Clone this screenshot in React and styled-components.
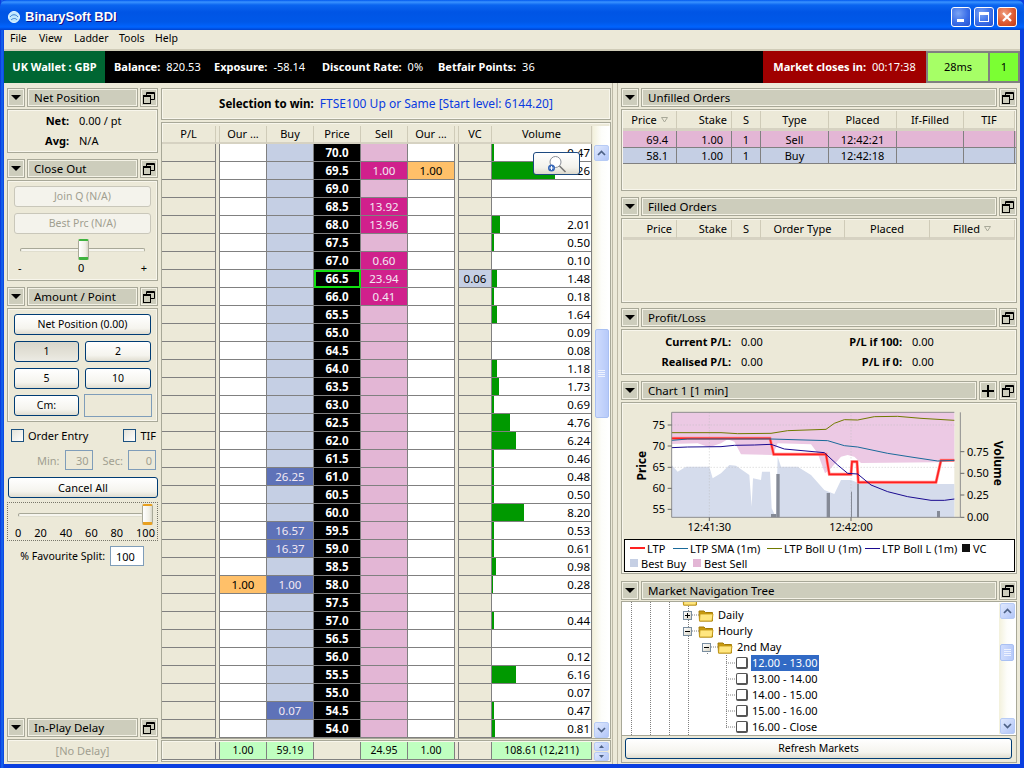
import React from "react";
import styled, { createGlobalStyle } from "styled-components";

const FONT = `"Noto Sans", "Liberation Sans", sans-serif`;
const CREAM = "#ece9d8";
const LINE = "#808080";

const Global = createGlobalStyle`
  html, body { margin: 0; padding: 0; background: #0a3ce0; }
  body { font-family: ${FONT}; font-size: 11px; line-height: 15px; color: #000; }
  * { box-sizing: border-box; }
`;

const Win = styled.div`
  width: 1024px; height: 768px; display: flex; flex-direction: column; overflow: hidden;
  background: linear-gradient(90deg, #0831d9 0, #166aee 2px, #0a3fe0 4px, #0a3fe0 1020px, #0a3fe0 100%);
`;
const TitleBar = styled.div`
  height: 30px; flex: none; display: flex; align-items: center; padding: 3px 7px 0 8px; gap: 5px;
  border-radius: 7px 7px 0 0;
  background: linear-gradient(180deg, #0058ee 0, #3a93ff 2px, #0a65f0 5px, #0055e5 12px, #0058e8 22px, #0064ff 27px, #0043cf 30px);
`;
const TitleText = styled.div`
  font: bold 13px "Liberation Sans", sans-serif; color: #fff; text-shadow: 1px 1px 0 #0f1089; flex: 1;
`;
const WinBtns = styled.div` display: flex; gap: 3px; `;
const WinBtn = styled.div`
  width: 20px; height: 20px; border: 1px solid #fff; border-radius: 3px; display: flex; align-items: center; justify-content: center;
  background: ${(p) => p.$close
    ? "radial-gradient(circle at 35% 30%, #f0a080, #dd5a32 55%, #c03a14)"
    : "radial-gradient(circle at 35% 30%, #7ba4f4, #3a6ee8 55%, #2450d0)"};
`;
const Client = styled.div`
  flex: 1; margin: 0 4px 4px; background: ${CREAM}; display: flex; flex-direction: column; min-height: 0;
`;
const MenuBar = styled.div`
  height: 21px; flex: none; display: flex; align-items: center; padding: 0 6px 2px; border-bottom: 2px solid #d0ccb8; font-size: 10.5px;
`;
const MenuItem = styled.span` width: ${(p) => p.$w}px; `;
const StatusBar = styled.div`
  height: 32px; flex: none; display: flex; background: #000; color: #fff; align-items: stretch;
`;
const Wallet = styled.div`
  width: 101px; background: #006633; font-weight: bold; display: flex; align-items: center; justify-content: center; padding-bottom: 2px;
`;
const Stats = styled.div` flex: 1; display: flex; align-items: center; padding: 0 0 2px 9px; `;
const Stat = styled.div` display: flex; gap: 6px; white-space: nowrap; width: ${(p) => p.$w}px; `;
const StatLabel = styled.b``;
const Closes = styled.div`
  width: 163px; background: #a00000; display: flex; align-items: center; justify-content: center; gap: 6px; white-space: nowrap; padding-bottom: 2px;
`;
const Lights = styled.div`
  display: flex; gap: 2px; background: ${LINE}; border: 2px solid ${LINE};
`;
const Light = styled.div`
  width: ${(p) => p.$w}px; background: ${(p) => p.$bg}; color: #000; display: flex; align-items: center; justify-content: center; padding-bottom: 2px;
`;

const Main = styled.div`
  flex: 1; min-height: 0; display: flex; padding: 5px 0 0 3px;
`;
const Column = styled.div`
  display: flex; flex-direction: column; min-height: 0; flex: none;
`;
const LeftCol = styled(Column)` width: 151px; padding-bottom: 2px; `;
const CenterCol = styled(Column)` margin-left: 3px; width: 450px; `;
const Splitter = styled.div` width: 6px; margin: -5px 0 0 1px; border-left: 1px solid #bdb9a6; border-right: 1px solid #bdb9a6; flex: none; `;
const RightCol = styled(Column)` margin-left: 3px; width: 396px; `;

const PanelWrap = styled.div` display: flex; flex-direction: column; flex: none; margin-bottom: ${(p) => p.$mb ?? 6}px; `;
const PanelHead = styled.div` display: flex; gap: 2px; height: 19px; flex: none; `;
const HeadBox = styled.div`
  background: #cdcdbc; border: 1px solid #a8a898; box-shadow: inset 0 0 0 1px #f4f2e6;
  display: flex; align-items: center; justify-content: center; flex: none; width: ${(p) => p.$w || 19}px;
`;
const HeadTitle = styled.div`
  flex: 1; background: #cdcdbc; border: 1px solid #a8a898; box-shadow: inset 0 0 0 1px #f4f2e6;
  display: flex; align-items: center; padding: 0 0 1px 6px; white-space: nowrap; font-size: 11.5px;
`;
const PanelBody = styled.div`
  margin-top: 2px; height: ${(p) => p.$h}px; border: 1px solid #a8a898; box-shadow: inset 0 0 0 1px #f8f6ec; position: relative;
  padding: ${(p) => p.$pad || "0"};
`;
const Arrow = styled.i`
  width: 0; height: 0; border-left: 5px solid transparent; border-right: 5px solid transparent; border-top: 5px solid #000;
`;
const RestoreIcon = () => (
  <svg width="12" height="12" viewBox="0 0 12 12" fill="none" stroke="#000" strokeWidth="1">
    <path d="M3.5 3.5V.5h8v7h-4" strokeWidth="1" />
    <path d="M3.5 1.5h8" />
    <rect x="0.5" y="3.5" width="7" height="8" fill="none" />
    <path d="M0.5 4.5h7" />
  </svg>
);
const PlusIcon = () => (
  <svg width="12" height="12" viewBox="0 0 12 12"><path d="M5 0h2v5h5v2H7v5H5V7H0V5h5z" fill="#000" /></svg>
);

function Panel({ title, h, pad, mb, plus, children }) {
  return (
    <PanelWrap $mb={mb}>
      <PanelHead>
        <HeadBox $w={18}><Arrow /></HeadBox>
        <HeadTitle>{title}</HeadTitle>
        {plus && <HeadBox $w={18}><PlusIcon /></HeadBox>}
        <HeadBox $w={18}><RestoreIcon /></HeadBox>
      </PanelHead>
      <PanelBody $h={h} $pad={pad}>{children}</PanelBody>
    </PanelWrap>
  );
}

const KV = styled.div`
  display: grid; grid-template-columns: 61px auto; row-gap: 5px; column-gap: 10px; padding-top: 3px; align-items: center;
`;
const KLabel = styled.b` text-align: right; white-space: nowrap; `;
const KValue = styled.span` white-space: nowrap; `;

const XpButton = styled.div`
  height: 21px; border-radius: 3px; border: 1px solid ${(p) => (p.$off ? "#c9c7ba" : "#003c74")};
  display: flex; align-items: center; justify-content: center; white-space: nowrap; font-size: 10.5px; padding-bottom: 1px;
  color: ${(p) => (p.$off ? "#a19f90" : "#000")};
  background: ${(p) => p.$off
    ? "#f4f3ec"
    : p.$on
      ? "linear-gradient(180deg, #d8d6cb, #e4e2d8 60%, #ecebe4)"
      : "linear-gradient(180deg, #fff, #f5f4ee 70%, #e0ddd0)"};
`;
const Stack = styled.div` display: flex; flex-direction: column; gap: 6px; `;
const TwoCol = styled.div` display: grid; grid-template-columns: 65px 66px; column-gap: 6px; `;
const GhostInput = styled.div` border: 1px solid #7f9db9; height: 23px; margin-top: -1px; width: 68px; margin-left: -1px; `;

const SliderWrap = styled.div` position: relative; height: 21px; margin-top: ${(p) => p.$mt || 0}px; `;
const Track = styled.div`
  position: absolute; left: ${(p) => p.$l}px; right: ${(p) => p.$r}px; top: 9px; height: 4px; border-radius: 2px;
  border: 1px solid #a8a898; border-bottom-color: #e0dece; background: #f6f5ee; border-left-color: #9d9c8e;
`;
const Thumb = styled.div`
  position: absolute; left: ${(p) => p.$x}px; top: 0; width: 11px; height: 21px; border: 1px solid #a9a998; border-radius: 2px;
  background: linear-gradient(90deg, #fff, #f0efe6 70%, #d8d6c8);
  border-top: 2px solid ${(p) => p.$c}; border-bottom: 3px solid ${(p) => p.$c};
`;
const ScaleRow = styled.div` display: flex; justify-content: space-between; padding: ${(p) => p.$pad}; `;

const CheckBox = styled.i`
  display: block; width: 13px; height: 13px; border: 1px solid #1c5180; background: linear-gradient(135deg, #e4e2d8, #fff);
`;
const OrderRow = styled.div` display: flex; justify-content: space-between; align-items: center; padding: 0 2px 0 4px; margin-top: 5px; height: 16px; `;
const CheckLabel = styled.label` display: flex; align-items: center; gap: 4px; `;
const TimeRow = styled.div` display: flex; justify-content: flex-end; align-items: center; gap: 5px; margin-top: 7px; padding-right: 2px; color: #a19f90; height: 20px; `;
const TimeBox = styled.div`
  border: 1px solid #7f9db9; width: 28px; height: 20px; display: flex; align-items: center; justify-content: flex-end; padding-right: 3px; margin-right: ${(p) => p.$mr || 0}px;
`;
const CancelBtn = styled(XpButton)` margin: 7px 0 0 1px; font-size: 11px; `;
const SplitBox = styled.div` border: 1px dotted #77766a; height: 39px; margin: 4px 0 0 0; padding: 1px 2px 0 4px; `;
const FavRow = styled.div` display: flex; justify-content: flex-end; align-items: center; gap: 5px; margin-top: 5px; padding-right: 14px; font-size: 10.5px; `;
const FavInput = styled.div`
  width: 34px; height: 20px; background: #fff; border: 1px solid #7f9db9; display: flex; align-items: center; padding-left: 5px; font-size: 11px;
`;
const Spacer = styled.div` flex: 1; `;
const NoDelay = styled.div` height: 100%; display: flex; align-items: center; justify-content: center; color: #a19f90; padding-bottom: 1px; `;

const SelectionBox = styled.div`
  height: 32px; flex: none; border: 1px solid #a8a898; box-shadow: inset 0 0 0 1px #f8f6ec; display: flex; align-items: center; justify-content: center; gap: 6px;
  font-size: 11.5px; padding-bottom: 1px;
`;
const SelLabel = styled.b``;
const SelName = styled.span` color: #0a3be0; font-size: 12px; `;
const LadderBox = styled.div`
  margin-top: 2px; height: 617px; border: 1px solid #a8a898; box-shadow: inset 0 0 0 1px #f8f6ec; padding: 3px 0 0 0; display: flex; position: relative;
`;
const GRID = "54px 4px 47px 47px 47px 47px 47px 4px 33px 100px";
const LadderTable = styled.div` width: 430px; `;
const HeadRow = styled.div` display: grid; grid-template-columns: ${GRID}; height: 18px; `;
const HCell = styled.div`
  display: flex; align-items: center; justify-content: center; border-bottom: 3px solid #d6d2c2; border-right: 1px solid #cfcbb8; white-space: nowrap; padding-bottom: 1px;
`;
const Row = styled.div` display: grid; grid-template-columns: ${GRID}; height: 18px; `;
const BG = {
  plain: CREAM, white: "#fff", buy: "#c5cfe4", buyOn: "#5e72b8", sell: "#e3b6d5", sellOn: "#d0208c", our: "#ffc069",
  vc: "#c5cfe4",
};
const Cell = styled.div`
  background: ${(p) => BG[p.$k] || CREAM}; color: ${(p) => (p.$k === "buyOn" || p.$k === "sellOn" ? "#f3e9f3" : "#000")};
  border-bottom: 1px solid ${LINE}; border-right: 1px solid ${LINE};
  display: flex; align-items: center; justify-content: center; font-size: 11.5px;
`;
const Gap = styled.div` background: ${CREAM}; border-right: 1px solid ${LINE}; `;
const PriceCell = styled.div`
  background: #000; color: #fff; font-weight: bold; font-size: 11.5px; display: flex; align-items: center; justify-content: center;
  border-bottom: 1px solid ${LINE}; border-right: 1px solid ${LINE};
  ${(p) => p.$cur && "outline: 2px solid #10e010; outline-offset: -2px;"}
`;
const VolCell = styled.div`
  background: #fff; border-bottom: 1px solid ${LINE}; border-right: 1px solid ${LINE}; display: flex; justify-content: space-between; align-items: center; font-size: 11.5px; padding-right: 1px;
`;
const VolBar = styled.div` height: 100%; background: #009900; flex: none; `;
const ScrollCol = styled.div` width: 17px; margin-left: 1px; padding: 19px 1px 0; display: flex; flex-direction: column; align-items: center;
  background: linear-gradient(90deg, #f3f1dc, #fdfdfa 50%, #fff 90%);
`;
const TreeScroll = styled(ScrollCol)` position: absolute; right: 1px; top: 1px; bottom: 1px; padding: 0 1px; width: 16px; margin: 0; `;
const SBtn = styled.div`
  width: 15px; height: 16px; flex: none; border: 1px solid #b7cbf5; border-radius: 2px; background: linear-gradient(135deg, #dfe8fd, #b2c6f8); display: flex; align-items: center; justify-content: center;
`;
const SThumb = styled.div`
  width: 14px; height: ${(p) => p.$h}px; flex: none; margin-top: ${(p) => p.$mt}px; margin-bottom: ${(p) => p.$mb}px; border: 1px solid #a9c0f3; border-radius: 2px;
  background: linear-gradient(90deg, #cfdcfd, #b7caf9); display: flex; align-items: center; justify-content: center;
`;
const Chev = ({ up }) => (
  <svg width="9" height="6" viewBox="0 0 9 6" fill="none" stroke="#4d6185" strokeWidth="1.7">
    <path d={up ? "M1 5l3.5-3.5L8 5" : "M1 1l3.5 3.5L8 1"} />
  </svg>
);
const Grip = () => (
  <svg width="7" height="8" viewBox="0 0 7 8" stroke="#eef2fe" strokeWidth="1"><path d="M0 .5h7M0 2.5h7M0 4.5h7M0 6.5h7" /></svg>
);
const Tooltip = styled.div`
  position: absolute; left: 371px; top: 29px; width: 47px; height: 23px; border: 1px solid #1d4a80; border-radius: 3px; background: linear-gradient(180deg, #fff, #f2f1eb 70%, #dcd9cc);
  display: flex; align-items: center; justify-content: center;
`;
const FootBox = styled.div`
  margin-top: 1px; height: 22px; border: 1px solid #a8a898; box-shadow: inset 0 0 0 1px #f8f6ec; padding: 1px 0 0 0; display: flex;
`;
const FootRow = styled.div` display: grid; grid-template-columns: ${GRID}; width: 430px; height: 18px; `;
const FCell = styled.div`
  background: ${(p) => (p.$g ? "#c0ffc0" : CREAM)}; border-right: 1px solid ${LINE}; border-bottom: 1px solid ${LINE}; display: flex; align-items: center; justify-content: center; font-size: 10.5px; white-space: nowrap;
`;
const FGap = styled.div` border-right: 1px solid ${LINE}; border-bottom: 1px solid ${LINE}; `;
const Spin = styled.div` width: 15px; margin-left: 2px; display: flex; flex-direction: column; gap: 1px; `;
const SpinBtn = styled(SBtn)` height: 9px; `;
const Tiny = ({ up }) => (
  <svg width="5" height="3" viewBox="0 0 5 3"><path d={up ? "M0 3L2.5 0 5 3z" : "M0 0l2.5 3L5 0z"} fill="#4d6185" /></svg>
);

const OrderHead = styled.div` display: grid; grid-template-columns: ${(p) => p.$cols}; height: 20px; margin: 1px 0 0 1px; `;
const OH = styled.div`
  display: flex; align-items: center; justify-content: ${(p) => (p.$r ? "flex-end" : "center")}; gap: 4px;
  padding: 0 ${(p) => (p.$r ? 4 : 0)}px 0 0; border-bottom: 3px solid #d6d2c2; border-right: 1px solid #cfcbb8;
`;
const Sort = () => (
  <svg width="7" height="6" viewBox="0 0 7 6" fill="none" stroke="#a8a898"><path d="M.5.5h6L3.5 5z" /></svg>
);
const ORow = styled.div` display: grid; grid-template-columns: ${(p) => p.$cols}; height: ${(p) => p.$h}px; margin-left: 1px; background: ${(p) => p.$bg}; border-bottom: 1px solid ${LINE}; `;
const OCell = styled.div`
  display: flex; align-items: center; justify-content: ${(p) => (p.$r ? "flex-end" : "center")}; padding-right: ${(p) => (p.$r ? 8 : 0)}px; border-right: 1px solid ${LINE};
`;
const PLGrid = styled.div`
  display: grid; grid-template-columns: 119px 60px 111px auto; justify-content: start; row-gap: 5px; padding-top: 4px;
`;
const PLLabel = styled.b` text-align: right; white-space: nowrap; padding-right: 10px; `;
const PLVal = styled.span``;

const ChartBody = styled.div` padding: 0 0 0 1px; `;
const Legend = styled.div`
  margin: 0 0 0 1px; width: 391px; height: 33px; background: #fff; border: 1px solid #000; display: flex; flex-wrap: wrap; align-content: center; padding: 0 0 0 5px;
`;
const LegItem = styled.div` display: flex; align-items: center; gap: 2px; white-space: nowrap; width: ${(p) => p.$w}px; `;
const LegBreak = styled.div` flex-basis: 100%; height: 0; `;
const LegLine = styled.i` display: block; width: 15px; height: ${(p) => p.$t || 1}px; background: ${(p) => p.$c}; flex: none; `;
const LegSq = styled.i` display: block; width: 8px; height: 8px; background: ${(p) => p.$c}; margin-right: 1px; flex: none; `;

const Tree = styled.div` height: 134px; flex: none; border: 1px solid #a8a898; border-bottom: none; margin-top: 1px; overflow: hidden; background: #fff; position: relative; `;
const TreeList = styled.div` margin-top: -11px; position: relative; `;
const TreeRow = styled.div` height: 16px; display: flex; align-items: center; padding-left: ${(p) => p.$i}px; white-space: nowrap; `;
const Exp = styled.div`
  width: 9px; height: 9px; border: 1px solid #7a8ea0; background: linear-gradient(135deg, #fff, #d8d4c4); margin-right: 6px; display: flex; align-items: center; justify-content: center; position: relative; flex: none;
`;
const ExpSvg = ({ plus }) => (
  <svg width="7" height="7" viewBox="0 0 7 7" stroke="#000"><path d="M1 3.5h5" />{plus && <path d="M3.5 1v5" />}</svg>
);
const Folder = () => (
  <svg width="16" height="14" viewBox="0 0 16 14" style={{ flex: "none" }}>
    <path d="M1 3h5l1.5 1.5H14.5V13H1.5z" fill="#c99a10" stroke="#a27a08" />
    <path d="M2 6h13l-1 7H1.5z" fill="#ffe680" stroke="#c09410" strokeWidth="0.8" />
  </svg>
);
const TreeText = styled.span`
  margin-left: ${(p) => p.$ml ?? 3}px; padding: 0 1px; height: 16px; line-height: 15px;
  ${(p) => p.$sel && "background: #316ac5; color: #fff;"}
`;
const LeafBox = styled.i`
  display: block; width: 12px; height: 12px; border: 1px solid #555; border-radius: 2px; border-right-width: 2px; border-bottom-width: 2px; background: #fff; flex: none;
`;
const Guides = styled.svg` position: absolute; left: 0; top: 0; pointer-events: none; `;
const RefreshWrap = styled.div` padding: 2px 4px 3px 3px; border: 1px solid #a8a898; `;

const rows = [
  ["70.0", {}, 0.47, 2], ["69.5", { sell: "1.00", os: "1.00" }, 7.26, 63], ["69.0", {}], ["68.5", { sell: "13.92" }], ["68.0", { sell: "13.96" }, 2.01, 8],
  ["67.5", {}, 0.5, 2], ["67.0", { sell: "0.60" }, 0.1, 0], ["66.5", { sell: "23.94", vc: "0.06", cur: 1 }, 1.48, 5], ["66.0", { sell: "0.41" }, 0.18, 2],
  ["65.5", {}, 1.64, 5], ["65.0", {}, 0.09, 0], ["64.5", {}, 0.08, 0], ["64.0", {}, 1.18, 5], ["63.5", {}, 1.73, 7], ["63.0", {}, 0.69, 2],
  ["62.5", {}, 4.76, 18], ["62.0", {}, 6.24, 24], ["61.5", {}, 0.46, 2], ["61.0", { buy: "26.25" }, 0.48, 2], ["60.5", {}, 0.5, 2], ["60.0", {}, 8.2, 32],
  ["59.5", { buy: "16.57" }, 0.53, 2], ["59.0", { buy: "16.37" }, 0.61, 2], ["58.5", {}, 0.98, 4], ["58.0", { ob: "1.00", buy: "1.00" }, 0.28, 1], ["57.5", {}],
  ["57.0", {}, 0.44, 2], ["56.5", {}], ["56.0", {}, 0.12, 0], ["55.5", {}, 6.16, 24], ["55.0", {}, 0.07, 0], ["54.5", { buy: "0.07" }, 0.47, 2], ["54.0", {}, 0.81, 3],
];

const UF = "54px 55px 29px 68px 68px 67px 51px";
const FL = "54px 55px 29px 84px 85px 85px";
const MENU = [["File", 29], ["View", 35], ["Ladder", 45], ["Tools", 36], ["Help", 30]];

function Chart() {
  const C = { fontSize: 33, fontFamily: FONT };
  const yl = [[75, 150], [70, 213], [65, 277], [60, 340], [55, 403]];
  const yr = [["0.75", 230], ["0.50", 295], ["0.25", 360], ["0.00", 427]];
  return (
    <svg width="393" height="136" viewBox="6 84 1179 408" style={{ display: "block" }}>
      <rect x="152" y="112" width="848" height="315" fill="#fff" />
      <path d="M152 112H1000V255L950 262 720 264 700 245 680 240 660 245 625 285 612 295 590 235 570 208 470 205 455 240 360 238 340 200 320 193 300 205 265 217 230 205 152 207Z" fill="#ecc9e4" />
      <path d="M152 270 170 290 195 275 265 275 275 310 300 295 325 270 345 272 385 300 392 395 396 310 420 315 423 290 447 290 452 400 465 427 470 245 480 275 530 275 570 300 610 345 640 357 660 315 690 315 720 327H1000V427H152Z" fill="#d5dcec" />
      <g stroke="#bbb" strokeWidth="2" strokeDasharray="3 6" fill="none">
        <path d="M152 150H1000M152 277H1000M265 112V427M690 112V427" />
      </g>
      <g fill="#858a96">
        <rect x="450" y="417" width="16" height="10" />
        <rect x="466" y="297" width="10" height="130" />
        <rect x="617" y="354" width="10" height="73" />
        <rect x="690" y="350" width="3" height="77" />
        <rect x="708" y="325" width="6" height="102" />
        <rect x="948" y="408" width="9" height="19" />
      </g>
      <path d="M152 190H447L458 238H615L625 298H690L693 260H708L712 322H945L960 256H1000" fill="none" stroke="#ff9090" strokeWidth="9" />
      <path d="M152 190H447L458 238H615L625 298H690L693 260H708L712 322H945L960 256H1000" fill="none" stroke="#ff2020" strokeWidth="5" />
      <path d="M152 196 200 192H450L620 197 670 212 710 216 800 235 870 246 950 258 1000 256" fill="none" stroke="#1a6a9a" strokeWidth="3" />
      <path d="M152 173H300L350 176 450 175 500 167 615 163 640 145 670 134 710 135 760 125 830 124 900 130 1000 136" fill="none" stroke="#707a00" strokeWidth="3" />
      <path d="M152 218 200 216 300 215 340 211 400 210 450 208 490 222 610 233 650 270 680 295 710 297 750 330 800 350 860 365 930 376 970 376 1000 372" fill="none" stroke="#1a0a90" strokeWidth="3" />
      <path d="M152 112V427H1018V112" fill="none" stroke="#8d8d8d" strokeWidth="3" />
      <path d="M152 112H1000" fill="none" stroke="#8d8d8d" strokeWidth="3" />
      {yl.map(([t, y]) => (
        <g key={t}>
          <path d={`M140 ${y}H152`} stroke="#666" strokeWidth="3" />
          <text x="132" y={y + 12} textAnchor="end" style={C}>{t}</text>
        </g>
      ))}
      {yr.map(([t, y]) => (
        <g key={t}>
          <path d={`M1018 ${y}H1030`} stroke="#666" strokeWidth="3" />
          <text x="1038" y={y + 12} style={C}>{t}</text>
        </g>
      ))}
      <path d="M265 427V438M690 427V438" stroke="#666" strokeWidth="3" />
      <text x="265" y="468" textAnchor="middle" style={C}>12:41:30</text>
      <text x="690" y="468" textAnchor="middle" style={C}>12:42:00</text>
      <text transform="translate(74 272) rotate(-90)" textAnchor="middle" style={{ fontSize: 36, fontFamily: FONT, fontWeight: 700 }}>Price</text>
      <text transform="translate(1120 265) rotate(90)" textAnchor="middle" style={{ fontSize: 36, fontFamily: FONT, fontWeight: 700 }}>Volume</text>
    </svg>
  );
}

const AppIcon = () => (
  <svg width="12" height="12" viewBox="0 0 12 12">
    <circle cx="6" cy="6" r="5.5" fill="#bfe8ff" stroke="#e8f8ff" strokeWidth="1" />
    <path d="M2 6c2-3 6-3 8 0M3 9c2-2 5-2 6 0" stroke="#3c7fd0" fill="none" />
  </svg>
);

export default function App() {
  return (
    <Win>
      <Global />
      <TitleBar>
        <AppIcon />
        <TitleText>BinarySoft BDI</TitleText>
        <WinBtns>
          <WinBtn><svg width="14" height="14" viewBox="0 0 14 14"><rect x="3" y="9" width="7" height="3" fill="#fff" /></svg></WinBtn>
          <WinBtn><svg width="14" height="14" viewBox="0 0 14 14" fill="none" stroke="#fff"><rect x="2.5" y="2.5" width="9" height="9" /><path d="M2.5 3.5h9M2.5 4.5h9" /></svg></WinBtn>
          <WinBtn $close><svg width="14" height="14" viewBox="0 0 14 14" stroke="#fff" strokeWidth="2.2"><path d="M3 3l8 8M11 3l-8 8" /></svg></WinBtn>
        </WinBtns>
      </TitleBar>
      <Client>
        <MenuBar>
          {MENU.map(([m, w]) => <MenuItem key={m} $w={w}>{m}</MenuItem>)}
        </MenuBar>
        <StatusBar>
          <Wallet>UK Wallet : GBP</Wallet>
          <Stats>
            <Stat $w={100}><StatLabel>Balance:</StatLabel><span>820.53</span></Stat>
            <Stat $w={108}><StatLabel>Exposure:</StatLabel><span>-58.14</span></Stat>
            <Stat $w={116}><StatLabel>Discount Rate:</StatLabel><span>0%</span></Stat>
            <Stat $w={110}><StatLabel>Betfair Points:</StatLabel><span>36</span></Stat>
          </Stats>
          <Closes><b>Market closes in:</b><span>00:17:38</span></Closes>
          <Lights>
            <Light $w={60} $bg="#a6ff66">28ms</Light>
            <Light $w={28} $bg="#7bff33">1</Light>
          </Lights>
        </StatusBar>
        <Main>
          <LeftCol>
            <Panel title="Net Position" h={44}>
              <KV>
                <KLabel>Net:</KLabel><KValue>0.00 / pt</KValue>
                <KLabel>Avg:</KLabel><KValue>N/A</KValue>
              </KV>
            </Panel>
            <Panel title="Close Out" h={101} pad="5px 6px 0 6px">
              <Stack>
                <XpButton $off>Join Q (N/A)</XpButton>
                <XpButton $off>Best Prc (N/A)</XpButton>
              </Stack>
              <SliderWrap $mt={5}>
                <Track $l={6} $r={6} />
                <Thumb $x={64} $c="#3fb33f" />
              </SliderWrap>
              <ScaleRow $pad="0 4px 0 4px"><span>-</span><span>0</span><span>+</span></ScaleRow>
            </Panel>
            <Panel title="Amount / Point" h={114} pad="5px 6px 0 6px" mb={0}>
              <Stack>
                <XpButton>Net Position (0.00)</XpButton>
                <TwoCol><XpButton $on>1</XpButton><XpButton>2</XpButton></TwoCol>
                <TwoCol><XpButton>5</XpButton><XpButton>10</XpButton></TwoCol>
                <TwoCol><XpButton>Cm:</XpButton><GhostInput /></TwoCol>
              </Stack>
            </Panel>
            <OrderRow>
              <CheckLabel><CheckBox />Order Entry</CheckLabel>
              <CheckLabel><CheckBox />TIF</CheckLabel>
            </OrderRow>
            <TimeRow>
              <span>Min:</span><TimeBox $mr={5}>30</TimeBox>
              <span>Sec:</span><TimeBox>0</TimeBox>
            </TimeRow>
            <CancelBtn>Cancel All</CancelBtn>
            <SplitBox>
              <SliderWrap>
                <Track $l={6} $r={12} />
                <Thumb $x={130} $c="#e8a020" />
              </SliderWrap>
              <ScaleRow $pad="0 0 0 3px">
                {[0, 20, 40, 60, 80, 100].map((n) => <span key={n}>{n}</span>)}
              </ScaleRow>
            </SplitBox>
            <FavRow>
              <span>% Favourite Split:</span><FavInput>100</FavInput>
            </FavRow>
            <Spacer />
            <Panel title="In-Play Delay" h={23} mb={0}>
              <NoDelay>[No Delay]</NoDelay>
            </Panel>
          </LeftCol>

          <CenterCol>
            <SelectionBox>
              <SelLabel>Selection to win:</SelLabel>
              <SelName>FTSE100 Up or Same [Start level: 6144.20]</SelName>
            </SelectionBox>
            <LadderBox>
              <LadderTable>
                <HeadRow>
                  <HCell>P/L</HCell><HCell />
                  <HCell>Our ...</HCell><HCell>Buy</HCell><HCell>Price</HCell><HCell>Sell</HCell><HCell>Our ...</HCell><HCell />
                  <HCell>VC</HCell><HCell>Volume</HCell>
                </HeadRow>
                {rows.map(([price, d, vol, bar]) => (
                  <Row key={price}>
                    <Cell $k="plain" />
                    <Gap />
                    <Cell $k={d.ob ? "our" : "white"}>{d.ob}</Cell>
                    <Cell $k={d.buy ? "buyOn" : "buy"}>{d.buy}</Cell>
                    <PriceCell $cur={d.cur}>{price}</PriceCell>
                    <Cell $k={d.sell ? "sellOn" : "sell"}>{d.sell}</Cell>
                    <Cell $k={d.os ? "our" : "white"}>{d.os}</Cell>
                    <Gap />
                    <Cell $k={d.vc ? "vc" : "plain"}>{d.vc}</Cell>
                    <VolCell>
                      <VolBar style={{ width: bar || 0 }} />
                      <span>{vol != null ? vol.toFixed(2) : ""}</span>
                    </VolCell>
                  </Row>
                ))}
              </LadderTable>
              <ScrollCol>
                <SBtn><Chev up /></SBtn>
                <SThumb $h={89} $mt={168} $mb={304}><Grip /></SThumb>
                <SBtn><Chev /></SBtn>
              </ScrollCol>
              <Tooltip>
                <svg width="22" height="20" viewBox="0 0 22 20" fill="none">
                  <circle cx="9.5" cy="8" r="5.5" stroke="#8a8f98" strokeWidth="1" fill="#fff" />
                  <path d="M13.5 12l6 6" stroke="#777" strokeWidth="1.6" />
                  <circle cx="5.5" cy="14" r="3.5" fill="#3667b8" />
                  <path d="M3.5 14h4M5.5 12v4" stroke="#fff" />
                </svg>
              </Tooltip>
            </LadderBox>
            <FootBox>
              <FootRow>
                <FGap /><FGap />
                <FCell $g>1.00</FCell><FCell $g>59.19</FCell><FCell />
                <FCell $g>24.95</FCell><FCell $g>1.00</FCell><FGap /><FCell />
                <FCell $g>108.61 (12,211)</FCell>
              </FootRow>
              <Spin>
                <SpinBtn><Tiny up /></SpinBtn>
                <SpinBtn><Tiny /></SpinBtn>
              </Spin>
            </FootBox>
          </CenterCol>

          <Splitter />

          <RightCol>
            <Panel title="Unfilled Orders" h={82} mb={6}>
              <OrderHead $cols={UF}>
                <OH>Price<Sort /></OH><OH $r>Stake</OH><OH>S</OH><OH>Type</OH><OH>Placed</OH><OH>If-Filled</OH><OH>TIF</OH>
              </OrderHead>
              <ORow $cols={UF} $bg="#e3b6d5" $h={17}>
                <OCell $r>69.4</OCell><OCell $r>1.00</OCell><OCell>1</OCell><OCell>Sell</OCell><OCell>12:42:21</OCell><OCell /><OCell />
              </ORow>
              <ORow $cols={UF} $bg="#c5cfe4" $h={16}>
                <OCell $r>58.1</OCell><OCell $r>1.00</OCell><OCell>1</OCell><OCell>Buy</OCell><OCell>12:42:18</OCell><OCell /><OCell />
              </ORow>
            </Panel>
            <Panel title="Filled Orders" h={85} mb={5}>
              <OrderHead $cols={FL}>
                <OH $r>Price</OH><OH $r>Stake</OH><OH>S</OH><OH>Order Type</OH><OH>Placed</OH><OH>Filled<Sort /></OH>
              </OrderHead>
            </Panel>
            <Panel title="Profit/Loss" h={46} mb={6}>
              <PLGrid>
                <PLLabel>Current P/L:</PLLabel><PLVal>0.00</PLVal>
                <PLLabel>P/L if 100:</PLLabel><PLVal>0.00</PLVal>
                <PLLabel>Realised P/L:</PLLabel><PLVal>0.00</PLVal>
                <PLLabel>P/L if 0:</PLLabel><PLVal>0.00</PLVal>
              </PLGrid>
            </Panel>
            <Panel title="Chart 1 [1 min]" h={172} mb={7} plus>
              <ChartBody>
                <Chart />
                <Legend>
                  <LegItem $w={43}><LegLine $c="#f22" $t={2} />LTP</LegItem>
                  <LegItem $w={94}><LegLine $c="#1a6a9a" />LTP SMA (1m)</LegItem>
                  <LegItem $w={98}><LegLine $c="#707a00" />LTP Boll U (1m)</LegItem>
                  <LegItem $w={97}><LegLine $c="#1a0a90" />LTP Boll L (1m)</LegItem>
                  <LegItem $w={40}><LegSq $c="#111" />VC</LegItem>
                  <LegBreak />
                  <LegItem $w={63}><LegSq $c="#c5cfe4" />Best Buy</LegItem>
                  <LegItem $w={70}><LegSq $c="#e3b6d5" />Best Sell</LegItem>
                </Legend>
              </ChartBody>
            </Panel>
            <PanelHead>
              <HeadBox $w={18}><Arrow /></HeadBox>
              <HeadTitle>Market Navigation Tree</HeadTitle>
              <HeadBox $w={18}><RestoreIcon /></HeadBox>
            </PanelHead>
            <Tree>
              <Guides width="396" height="134" fill="none" stroke="#808080" strokeDasharray="1 1">
                <path d="M9.5 0V134M28.5 0V134M47.5 0V134M66.5 0V134" />
                <path d="M85.5 45V52M104.5 53V126" />
                <path d="M70 13H77M70 29H77M89 45H96M104 61H115M104 77H115M104 93H115M104 109H115M104 125H115" />
              </Guides>
              <TreeList>
                <TreeRow $i={60}><Folder /></TreeRow>
                <TreeRow $i={61}><Exp><ExpSvg plus /></Exp><Folder /><TreeText>Daily</TreeText></TreeRow>
                <TreeRow $i={61}><Exp><ExpSvg /></Exp><Folder /><TreeText>Hourly</TreeText></TreeRow>
                <TreeRow $i={80}><Exp><ExpSvg /></Exp><Folder /><TreeText>2nd May</TreeText></TreeRow>
                <TreeRow $i={114}><LeafBox /><TreeText $sel $ml={3}>12.00 - 13.00</TreeText></TreeRow>
                <TreeRow $i={114}><LeafBox /><TreeText $ml={3}>13.00 - 14.00</TreeText></TreeRow>
                <TreeRow $i={114}><LeafBox /><TreeText $ml={3}>14.00 - 15.00</TreeText></TreeRow>
                <TreeRow $i={114}><LeafBox /><TreeText $ml={3}>15.00 - 16.00</TreeText></TreeRow>
                <TreeRow $i={114}><LeafBox /><TreeText $ml={3}>16.00 - Close</TreeText></TreeRow>
              </TreeList>
              <TreeScroll>
                <SBtn><Chev up /></SBtn>
                <SThumb $h={17} $mt={25} $mb={57}><Grip /></SThumb>
                <SBtn><Chev /></SBtn>
              </TreeScroll>
            </Tree>
            <RefreshWrap><XpButton>Refresh Markets</XpButton></RefreshWrap>
          </RightCol>
        </Main>
      </Client>
    </Win>
  );
}
